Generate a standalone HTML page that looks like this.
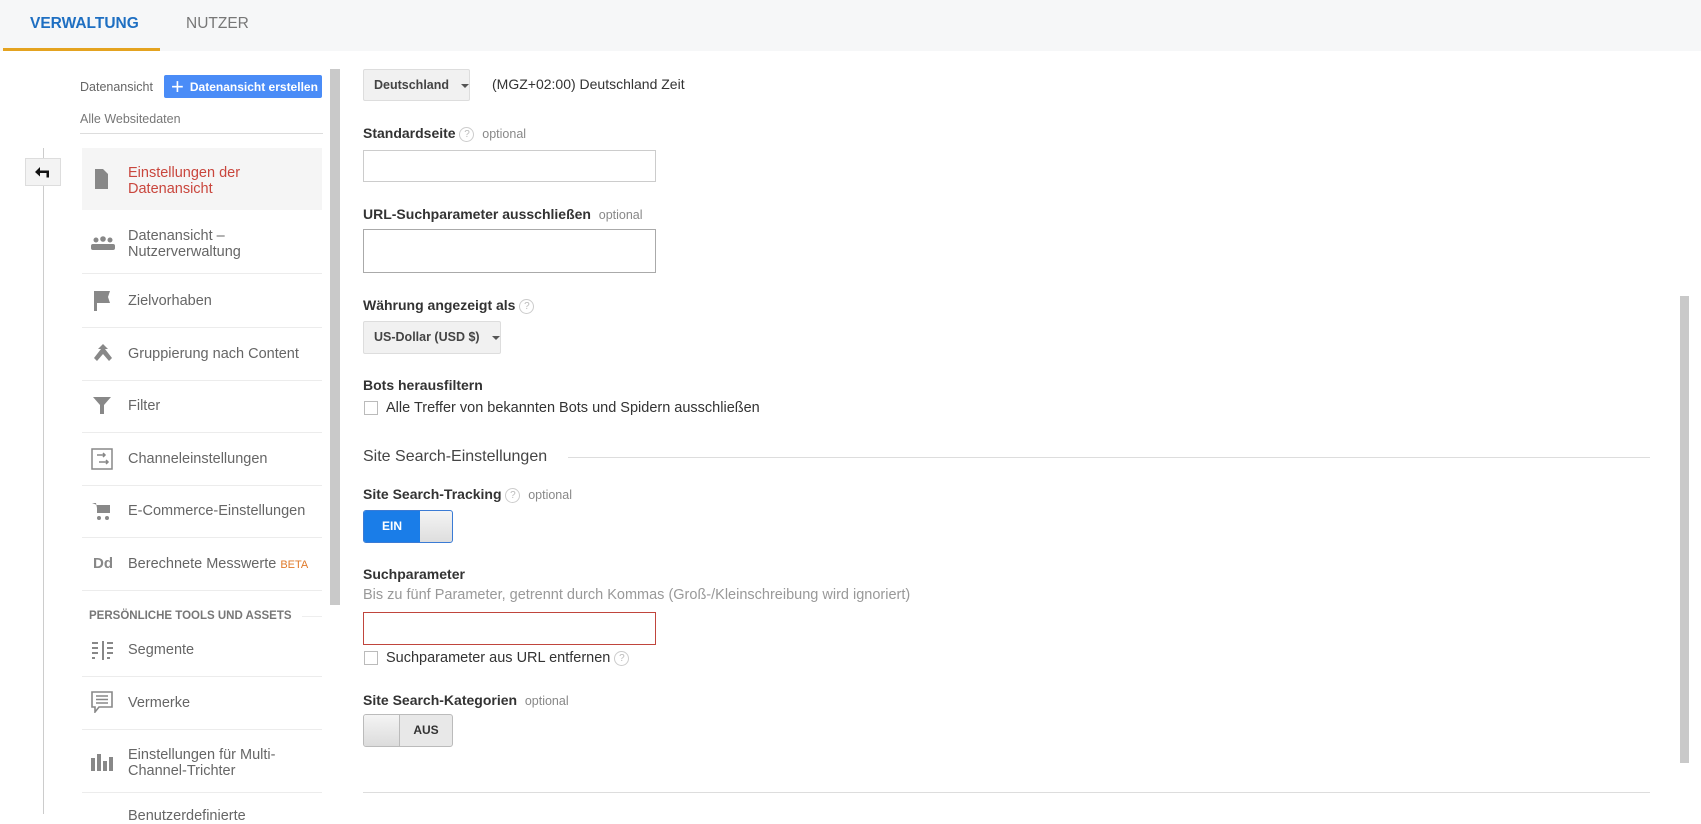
<!DOCTYPE html>
<html><head><meta charset="utf-8"><style>
*{box-sizing:border-box;margin:0;padding:0}
body{width:1701px;height:814px;overflow:hidden;background:#fff;font-family:"Liberation Sans",Arial,sans-serif;position:relative;color:#333}
.a{position:absolute;white-space:nowrap}
.hdr{position:absolute;left:0;top:0;width:1701px;height:51px;background:#f6f7f8}
.nav{font-size:14.5px;color:#666;line-height:16px}
.sep{position:absolute;left:82px;width:240px;height:1px;background:#ececec}
.lbl{font-size:14px;font-weight:bold;color:#333}
.opt{font-size:12.5px;color:#888;font-weight:normal}
.q{display:inline-block;width:15px;height:15px;border:1px solid #ccc;border-radius:50%;font-size:10px;color:#bbb;text-align:center;line-height:13px;font-weight:normal;vertical-align:middle}
.dd{position:absolute;background:#f1f1f1;border:1px solid #ddd;border-radius:2px;font-size:12.5px;font-weight:bold;color:#444;padding-left:10px;line-height:31px}
.tri{display:inline-block;border-left:4px solid transparent;border-right:4px solid transparent;border-top:4px solid #555;vertical-align:middle;margin-left:12px}
.inp{position:absolute;border:1px solid #ccc;background:#fff}
.cb{position:absolute;width:14px;height:14px;border:1px solid #bbb;background:#fff}
.ic{position:absolute;left:90px;width:26px;height:22px}
</style></head><body>
<div class="hdr"></div>
<div class="a" style="left:30px;top:15px;font-size:15.5px;color:#1e6fc2;font-weight:bold">VERWALTUNG</div>
<div class="a" style="left:186px;top:15px;font-size:15.5px;color:#777">NUTZER</div>
<div class="a" style="left:3px;top:48px;width:157px;height:3px;background:#e4a320"></div>

<div class="a" style="left:43px;top:148px;width:1px;height:666px;background:#ccc"></div>
<div class="a" style="left:25px;top:158px;width:36px;height:28px;background:#f3f3f3;border:1px solid #ddd"></div>
<svg class="a" style="left:34px;top:165px" width="18" height="14" viewBox="0 0 18 14"><path d="M1 7l5-5v3.5h9v7h-2.5V8H6v3.5z" fill="#111"/></svg>

<div class="a" style="left:80px;top:80px;font-size:12.5px;color:#666">Datenansicht</div>
<div class="a" style="left:164px;top:75px;width:158px;height:23px;background:#4a8cf7;border-radius:2px;color:#fff;font-size:12px;font-weight:bold;line-height:23px;padding-left:7px"><span style="font-size:22px;font-weight:normal;vertical-align:-3px;margin-right:6px">+</span>Datenansicht erstellen</div>
<div class="a" style="left:80px;top:112px;font-size:12.5px;color:#777">Alle Websitedaten</div>
<div class="a" style="left:80px;top:133px;width:243px;height:1px;background:#ddd"></div>
<div class="a" style="left:330px;top:69px;width:10px;height:536px;background:#c9c9c9"></div>

<div class="a" style="left:82px;top:148px;width:240px;height:62px;background:#f5f5f5"></div>
<svg class="ic" style="top:168px" viewBox="0 0 26 22"><path d="M5 1h8l5 5v15H5z" fill="#888"/></svg>
<div class="a nav" style="left:128px;top:165px;color:#c9463d">Einstellungen der<br>Datenansicht</div>

<svg class="ic" style="top:233px" viewBox="0 0 26 22"><circle cx="6" cy="7" r="2.5" fill="#888"/><circle cx="13" cy="6" r="2.8" fill="#888"/><circle cx="20" cy="7" r="2.5" fill="#888"/><rect x="1" y="11" width="24" height="6" rx="2" fill="#888"/></svg>
<div class="a nav" style="left:128px;top:228px">Datenansicht –<br>Nutzerverwaltung</div>
<div class="sep" style="top:273px"></div>

<svg class="ic" style="top:290px" viewBox="0 0 26 22"><path d="M4 1v20h3V13h13l-2-6 2-6z" fill="#888"/></svg>
<div class="a nav" style="left:128px;top:293px">Zielvorhaben</div>
<div class="sep" style="top:327px"></div>

<svg class="ic" style="top:343px" viewBox="0 0 26 22"><path d="M13 1l-5 5h3l-7 9 3 3 6-7 6 7 3-3-7-9h3z" fill="#888"/></svg>
<div class="a nav" style="left:128px;top:346px">Gruppierung nach Content</div>
<div class="sep" style="top:380px"></div>

<svg class="ic" style="top:395px" viewBox="0 0 26 22"><path d="M3 2h18l-7 8v9h-4v-9z" fill="#888"/></svg>
<div class="a nav" style="left:128px;top:398px">Filter</div>
<div class="sep" style="top:432px"></div>

<svg class="ic" style="top:448px" viewBox="0 0 26 22"><rect x="2" y="1" width="20" height="20" fill="none" stroke="#888" stroke-width="1.5"/><path d="M7 7h8M13 5l2 2-2 2M9 14h9M16 12l2 2-2 2" stroke="#888" stroke-width="1.5" fill="none"/></svg>
<div class="a nav" style="left:128px;top:451px">Channeleinstellungen</div>
<div class="sep" style="top:485px"></div>

<svg class="ic" style="top:500px" viewBox="0 0 26 22"><path d="M2 3h4l2 10h10l2-8H7" fill="#888"/><rect x="7" y="5" width="13" height="8" fill="#888"/><circle cx="9" cy="18" r="2" fill="#888"/><circle cx="17" cy="18" r="2" fill="#888"/></svg>
<div class="a nav" style="left:128px;top:503px">E-Commerce-Einstellungen</div>
<div class="sep" style="top:537px"></div>

<div class="a" style="left:93px;top:555px;font-size:15px;font-weight:bold;color:#888">Dd</div>
<div class="a nav" style="left:128px;top:556px">Berechnete Messwerte <span style="font-size:11px;color:#e07a2a">BETA</span></div>
<div class="sep" style="top:590px"></div>

<div class="a" style="left:89px;top:610px;font-size:11.5px;font-weight:bold;color:#777">PERSÖNLICHE TOOLS UND ASSETS</div>
<div class="a" style="left:302px;top:616px;width:20px;height:1px;background:#eee"></div>

<svg class="ic" style="top:639px" viewBox="0 0 26 22"><path d="M2 4h6M2 9h6M2 14h6M2 19h3M13 2v19M17 4h6M17 9h6M17 14h6M17 19h3" stroke="#888" stroke-width="2"/></svg>
<div class="a nav" style="left:128px;top:642px">Segmente</div>
<div class="sep" style="top:676px"></div>

<svg class="ic" style="top:691px" viewBox="0 0 26 22"><path d="M2 1h20v15H9l-4 5v-5H2z" fill="none" stroke="#888" stroke-width="1.6"/><path d="M6 5h12M6 8.5h12M6 12h12" stroke="#888" stroke-width="1.5"/></svg>
<div class="a nav" style="left:128px;top:695px">Vermerke</div>
<div class="sep" style="top:729px"></div>

<svg class="ic" style="top:751px" viewBox="0 0 26 22"><rect x="1" y="7" width="4" height="13" fill="#888"/><rect x="7" y="3" width="4" height="17" fill="#888"/><rect x="13" y="10" width="4" height="10" fill="#888"/><rect x="19" y="6" width="4" height="14" fill="#888"/></svg>
<div class="a nav" style="left:128px;top:747px">Einstellungen für Multi-<br>Channel-Trichter</div>
<div class="sep" style="top:792px"></div>
<div class="a nav" style="left:128px;top:808px">Benutzerdefinierte</div>

<div class="a" style="left:1680px;top:296px;width:9px;height:467px;background:#c9c9c9"></div>

<div class="dd" style="left:363px;top:69px;width:107px;height:32px">Deutschland<span class="tri"></span></div>
<div class="a" style="left:492px;top:76px;font-size:14px;color:#333">(MGZ+02:00) Deutschland Zeit</div>

<div class="a lbl" style="left:363px;top:125px">Standardseite <span class="q">?</span> &nbsp;<span class="opt">optional</span></div>
<div class="inp" style="left:363px;top:150px;width:293px;height:32px"></div>

<div class="a lbl" style="left:363px;top:206px">URL-Suchparameter ausschließen &nbsp;<span class="opt">optional</span></div>
<div class="inp" style="left:363px;top:229px;width:293px;height:44px;border-color:#aaa"></div>

<div class="a lbl" style="left:363px;top:297px">Währung angezeigt als <span class="q">?</span></div>
<div class="dd" style="left:363px;top:321px;width:138px;height:33px">US-Dollar (USD $)<span class="tri"></span></div>

<div class="a lbl" style="left:363px;top:377px">Bots herausfiltern</div>
<div class="cb" style="left:364px;top:401px"></div>
<div class="a" style="left:386px;top:400px;font-size:14.5px;color:#333">Alle Treffer von bekannten Bots und Spidern ausschließen</div>

<div class="a" style="left:363px;top:448px;font-size:16px;color:#444">Site Search-Einstellungen</div>
<div class="a" style="left:568px;top:457px;width:1082px;height:1px;background:#ddd"></div>

<div class="a lbl" style="left:363px;top:486px">Site Search-Tracking <span class="q">?</span> &nbsp;<span class="opt">optional</span></div>
<div class="a" style="left:363px;top:510px;width:90px;height:33px;border:1px solid #3a7bd5;border-radius:3px;overflow:hidden;background:linear-gradient(#f4f4f4,#dedede)">
 <div style="width:56px;height:100%;background:#1a7de8;color:#fff;font-size:12px;font-weight:bold;text-align:center;line-height:31px">EIN</div></div>

<div class="a lbl" style="left:363px;top:566px">Suchparameter</div>
<div class="a" style="left:363px;top:587px;font-size:14.5px;color:#999">Bis zu fünf Parameter, getrennt durch Kommas (Groß-/Kleinschreibung wird ignoriert)</div>
<div class="inp" style="left:363px;top:612px;width:293px;height:33px;border-color:#c0453d"></div>
<div class="cb" style="left:364px;top:651px"></div>
<div class="a" style="left:386px;top:650px;font-size:14.5px;color:#333">Suchparameter aus URL entfernen <span class="q">?</span></div>

<div class="a lbl" style="left:363px;top:692px">Site Search-Kategorien &nbsp;<span class="opt">optional</span></div>
<div class="a" style="left:363px;top:714px;width:90px;height:33px;border:1px solid #bbb;border-radius:3px;overflow:hidden;background:#e8e8e8">
 <div style="position:absolute;left:0;top:0;width:36px;height:100%;background:linear-gradient(#f4f4f4,#dcdcdc);border-right:1px solid #bbb"></div>
 <div style="position:absolute;left:36px;right:0;top:0;text-align:center;font-size:12px;font-weight:bold;color:#333;line-height:31px">AUS</div></div>

<div class="a" style="left:363px;top:792px;width:1287px;height:1px;background:#ddd"></div>
</body></html>
